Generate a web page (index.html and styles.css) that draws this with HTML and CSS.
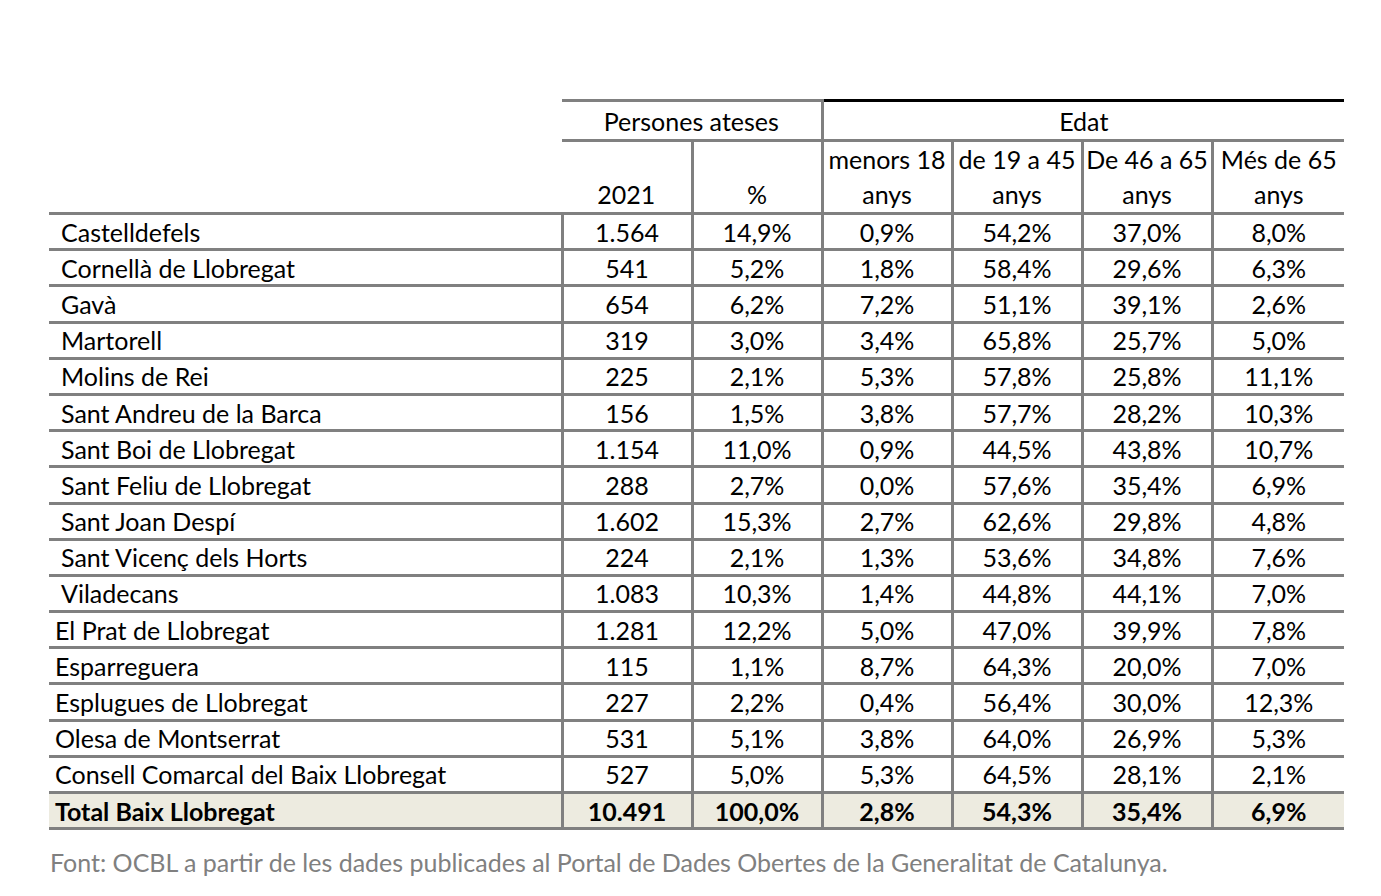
FILE: index.html
```html
<!DOCTYPE html>
<html lang="ca">
<head>
<meta charset="utf-8">
<title>Persones ateses</title>
<link rel="stylesheet" href="styles.css">
</head>
<body>
<div class="page">
<table class="stats">
<colgroup><col class="c-name"><col class="c-num"><col class="c-num"><col class="c-num"><col class="c-num"><col class="c-num"><col class="c-last"></colgroup>
<thead>
<tr class="h1"><th class="blank"></th><th colspan="2" class="grp">Persones ateses</th><th colspan="4" class="grp edat">Edat</th></tr>
<tr class="h2"><th class="blank"></th><th class="first">2021</th><th>%</th><th>menors 18<br>anys</th><th>de 19 a 45<br>anys</th><th>De 46 a 65<br>anys</th><th>Més de 65<br>anys</th></tr>
</thead>
<tbody>
<tr><td class="name ind">Castelldefels</td><td>1.564</td><td>14,9%</td><td>0,9%</td><td>54,2%</td><td>37,0%</td><td>8,0%</td></tr>
<tr><td class="name ind">Cornellà de Llobregat</td><td>541</td><td>5,2%</td><td>1,8%</td><td>58,4%</td><td>29,6%</td><td>6,3%</td></tr>
<tr><td class="name ind">Gavà</td><td>654</td><td>6,2%</td><td>7,2%</td><td>51,1%</td><td>39,1%</td><td>2,6%</td></tr>
<tr><td class="name ind">Martorell</td><td>319</td><td>3,0%</td><td>3,4%</td><td>65,8%</td><td>25,7%</td><td>5,0%</td></tr>
<tr><td class="name ind">Molins de Rei</td><td>225</td><td>2,1%</td><td>5,3%</td><td>57,8%</td><td>25,8%</td><td>11,1%</td></tr>
<tr><td class="name ind">Sant Andreu de la Barca</td><td>156</td><td>1,5%</td><td>3,8%</td><td>57,7%</td><td>28,2%</td><td>10,3%</td></tr>
<tr><td class="name ind">Sant Boi de Llobregat</td><td>1.154</td><td>11,0%</td><td>0,9%</td><td>44,5%</td><td>43,8%</td><td>10,7%</td></tr>
<tr><td class="name ind">Sant Feliu de Llobregat</td><td>288</td><td>2,7%</td><td>0,0%</td><td>57,6%</td><td>35,4%</td><td>6,9%</td></tr>
<tr><td class="name ind">Sant Joan Despí</td><td>1.602</td><td>15,3%</td><td>2,7%</td><td>62,6%</td><td>29,8%</td><td>4,8%</td></tr>
<tr><td class="name ind">Sant Vicenç dels Horts</td><td>224</td><td>2,1%</td><td>1,3%</td><td>53,6%</td><td>34,8%</td><td>7,6%</td></tr>
<tr><td class="name ind">Viladecans</td><td>1.083</td><td>10,3%</td><td>1,4%</td><td>44,8%</td><td>44,1%</td><td>7,0%</td></tr>
<tr><td class="name">El Prat de Llobregat</td><td>1.281</td><td>12,2%</td><td>5,0%</td><td>47,0%</td><td>39,9%</td><td>7,8%</td></tr>
<tr><td class="name">Esparreguera</td><td>115</td><td>1,1%</td><td>8,7%</td><td>64,3%</td><td>20,0%</td><td>7,0%</td></tr>
<tr><td class="name">Esplugues de Llobregat</td><td>227</td><td>2,2%</td><td>0,4%</td><td>56,4%</td><td>30,0%</td><td>12,3%</td></tr>
<tr><td class="name">Olesa de Montserrat</td><td>531</td><td>5,1%</td><td>3,8%</td><td>64,0%</td><td>26,9%</td><td>5,3%</td></tr>
<tr><td class="name">Consell Comarcal del Baix Llobregat</td><td>527</td><td>5,0%</td><td>5,3%</td><td>64,5%</td><td>28,1%</td><td>2,1%</td></tr>
<tr class="total"><td class="name">Total Baix Llobregat</td><td>10.491</td><td>100,0%</td><td>2,8%</td><td>54,3%</td><td>35,4%</td><td>6,9%</td></tr>
</tbody>
</table>
<p class="source">Font: OCBL a partir de les dades publicades al Portal de Dades Obertes de la Generalitat de Catalunya.</p>
</div>
</body>
</html>
```

FILE: styles.css
```css
html, body {
  margin: 0;
  padding: 0;
  background: #ffffff;
}

.page {
  padding: 99px 0 0 49px;
  font-family: Lato, "Liberation Sans", sans-serif;
  color: #000000;
}

.stats {
  border-collapse: collapse;
  table-layout: fixed;
  width: 1295px;
  font-size: 25px;
}

.c-name { width: 513px; }
.c-num { width: 130px; }
.c-last { width: 132px; }

.stats th,
.stats td {
  padding: 0;
  text-align: center;
  font-weight: normal;
  white-space: nowrap;
  line-height: 30px;
}

.h1 th {
  height: 37px;
  vertical-align: middle;
}

.h1 .grp {
  border-top: 3px solid #808080;
  border-bottom: 3px solid #808080;
}

.h1 .edat {
  border-top-color: #000000;
  border-left: 3px solid #808080;
}

.h2 th {
  height: 69px;
  line-height: 35px;
  vertical-align: bottom;
  border-bottom: 3px solid #808080;
  border-left: 3px solid #808080;
}

.h2 th.blank,
.h2 th.first {
  border-left: none;
}

.stats tbody tr {
  height: 36.2px;
}

.stats td {
  border-bottom: 3px solid #808080;
  border-left: 3px solid #808080;
  vertical-align: middle;
}

.stats td.name {
  border-left: none;
  text-align: left;
  padding-left: 6px;
}

.stats td.name.ind {
  padding-left: 12px;
}

.total td {
  background: #edebe0;
  font-weight: bold;
}

.source {
  margin: 17px 0 0 1px;
  font-size: 25px;
  color: #808080;
}
```
